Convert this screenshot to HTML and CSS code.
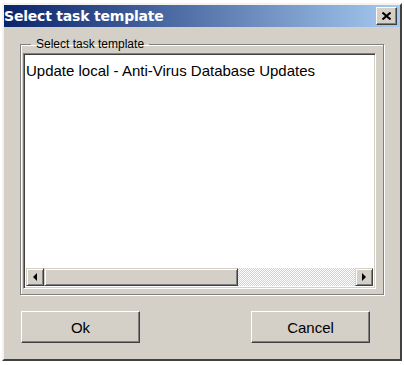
FILE: index.html
```html
<!DOCTYPE html>
<html>
<head>
    <title>Select task template</title>
    <link rel="stylesheet" href="styles.css">
</head>

<body>
    <div class="dialog">
        <div class="titlebar">
            <span class="title">Select task template</span>
            <button class="close" type="button">
                <svg width="9" height="8" viewBox="0 0 9 8"><path d="M0.5 0.5 L8.5 7.5 M8.5 0.5 L0.5 7.5" stroke="#000" stroke-width="2"/></svg>
            </button>
        </div>

        <div class="content">
            <fieldset class="group">
                <legend>Select task template</legend>
                <div class="listbox">
                    <div class="items">
                        <div class="item">Update local - Anti-Virus Database Updates</div>
                    </div>
                    <div class="hscroll">
                        <div class="arrow">
                            <svg width="6" height="8" viewBox="0 0 6 8"><path d="M5 0 L1 4 L5 8 Z" fill="#000"/></svg>
                        </div>
                        <div class="thumb"></div>
                        <div class="track"></div>
                        <div class="arrow">
                            <svg width="6" height="8" viewBox="0 0 6 8"><path d="M1 0 L5 4 L1 8 Z" fill="#000"/></svg>
                        </div>
                    </div>
                </div>
            </fieldset>

            <div class="buttons">
                <button class="btn" type="button">Ok</button>
                <button class="btn" type="button">Cancel</button>
            </div>
        </div>
    </div>
</body>

</html>
```

FILE: styles.css
```css
body {
    margin: 0;
    background: #ffffff;
    font-family: "Liberation Sans", Arial, sans-serif;
}

.dialog {
    width: 400px;
    height: 358px;
    margin: 3px 0 0 2px;
    box-sizing: border-box;
    background: #d4d0c8;
    border: 2px solid;
    border-color: #f4f3ef #404040 #404040 #f4f3ef;
    display: flex;
    flex-direction: column;
}

.titlebar {
    height: 22px;
    margin: 0;
    background: linear-gradient(to right, #0a246a, #a6caf0);
    display: flex;
    align-items: center;
    justify-content: space-between;
    padding: 0 3px 0 0;
}

.title {
    color: #ffffff;
    font-family: "DejaVu Sans", Verdana, sans-serif;
    font-weight: bold;
    font-size: 14px;
    letter-spacing: -0.2px;
}

.close {
    width: 21px;
    height: 18px;
    padding: 0;
    background: #d4d0c8;
    border: 1px solid;
    border-color: #ffffff #404040 #404040 #ffffff;
    box-shadow: inset -1px -1px 0 #808080;
    display: flex;
    align-items: center;
    justify-content: center;
}

.content {
    flex: 1;
    padding: 10px 16px 0 16px;
    display: flex;
    flex-direction: column;
}

.group {
    margin: 0;
    padding: 2px 7px 2px 2px;
    height: 258px;
    box-sizing: border-box;
    border: 1px solid #808080;
    box-shadow: inset 1px 1px 0 #ffffff, 1px 1px 0 #ffffff;
}

.group legend {
    margin-left: 8px;
    padding: 0 5px;
    font-size: 12px;
    color: #000000;
}

.listbox {
    height: 236px;
    box-sizing: border-box;
    background: #ffffff;
    border: 1px solid;
    border-color: #808080 #ffffff #ffffff #808080;
    box-shadow: inset 1px 1px 0 #404040, inset -1px -1px 0 #d4d0c8;
    padding: 2px;
    display: flex;
    flex-direction: column;
}

.items {
    flex: 1;
}

.item {
    font-size: 15px;
    color: #000000;
    padding: 6px 0 0 0;
    line-height: 17px;
}

.hscroll {
    height: 18px;
    display: flex;
}

.arrow {
    width: 18px;
    box-sizing: border-box;
    background: #d4d0c8;
    border: 1px solid;
    border-color: #d4d0c8 #404040 #404040 #d4d0c8;
    box-shadow: inset 1px 1px 0 #ffffff, inset -1px -1px 0 #808080;
    display: flex;
    align-items: center;
    justify-content: center;
}

.thumb {
    width: 194px;
    box-sizing: border-box;
    background: #d4d0c8;
    border: 1px solid;
    border-color: #d4d0c8 #404040 #404040 #d4d0c8;
    box-shadow: inset 1px 1px 0 #ffffff, inset -1px -1px 0 #808080;
}

.track {
    flex: 1;
    background-color: #ffffff;
    background-image: repeating-conic-gradient(#d4d0c8 0 25%, #ffffff 0 50%);
    background-size: 2px 2px;
}

.buttons {
    display: flex;
    justify-content: space-between;
    padding: 16px 14px 0 1px;
}

.btn {
    width: 119px;
    height: 32px;
    background: #d4d0c8;
    border: 1px solid;
    border-color: #ffffff #404040 #404040 #ffffff;
    box-shadow: inset -1px -1px 0 #808080;
    font-family: "Liberation Sans", Arial, sans-serif;
    font-size: 15px;
    color: #000000;
}
```
